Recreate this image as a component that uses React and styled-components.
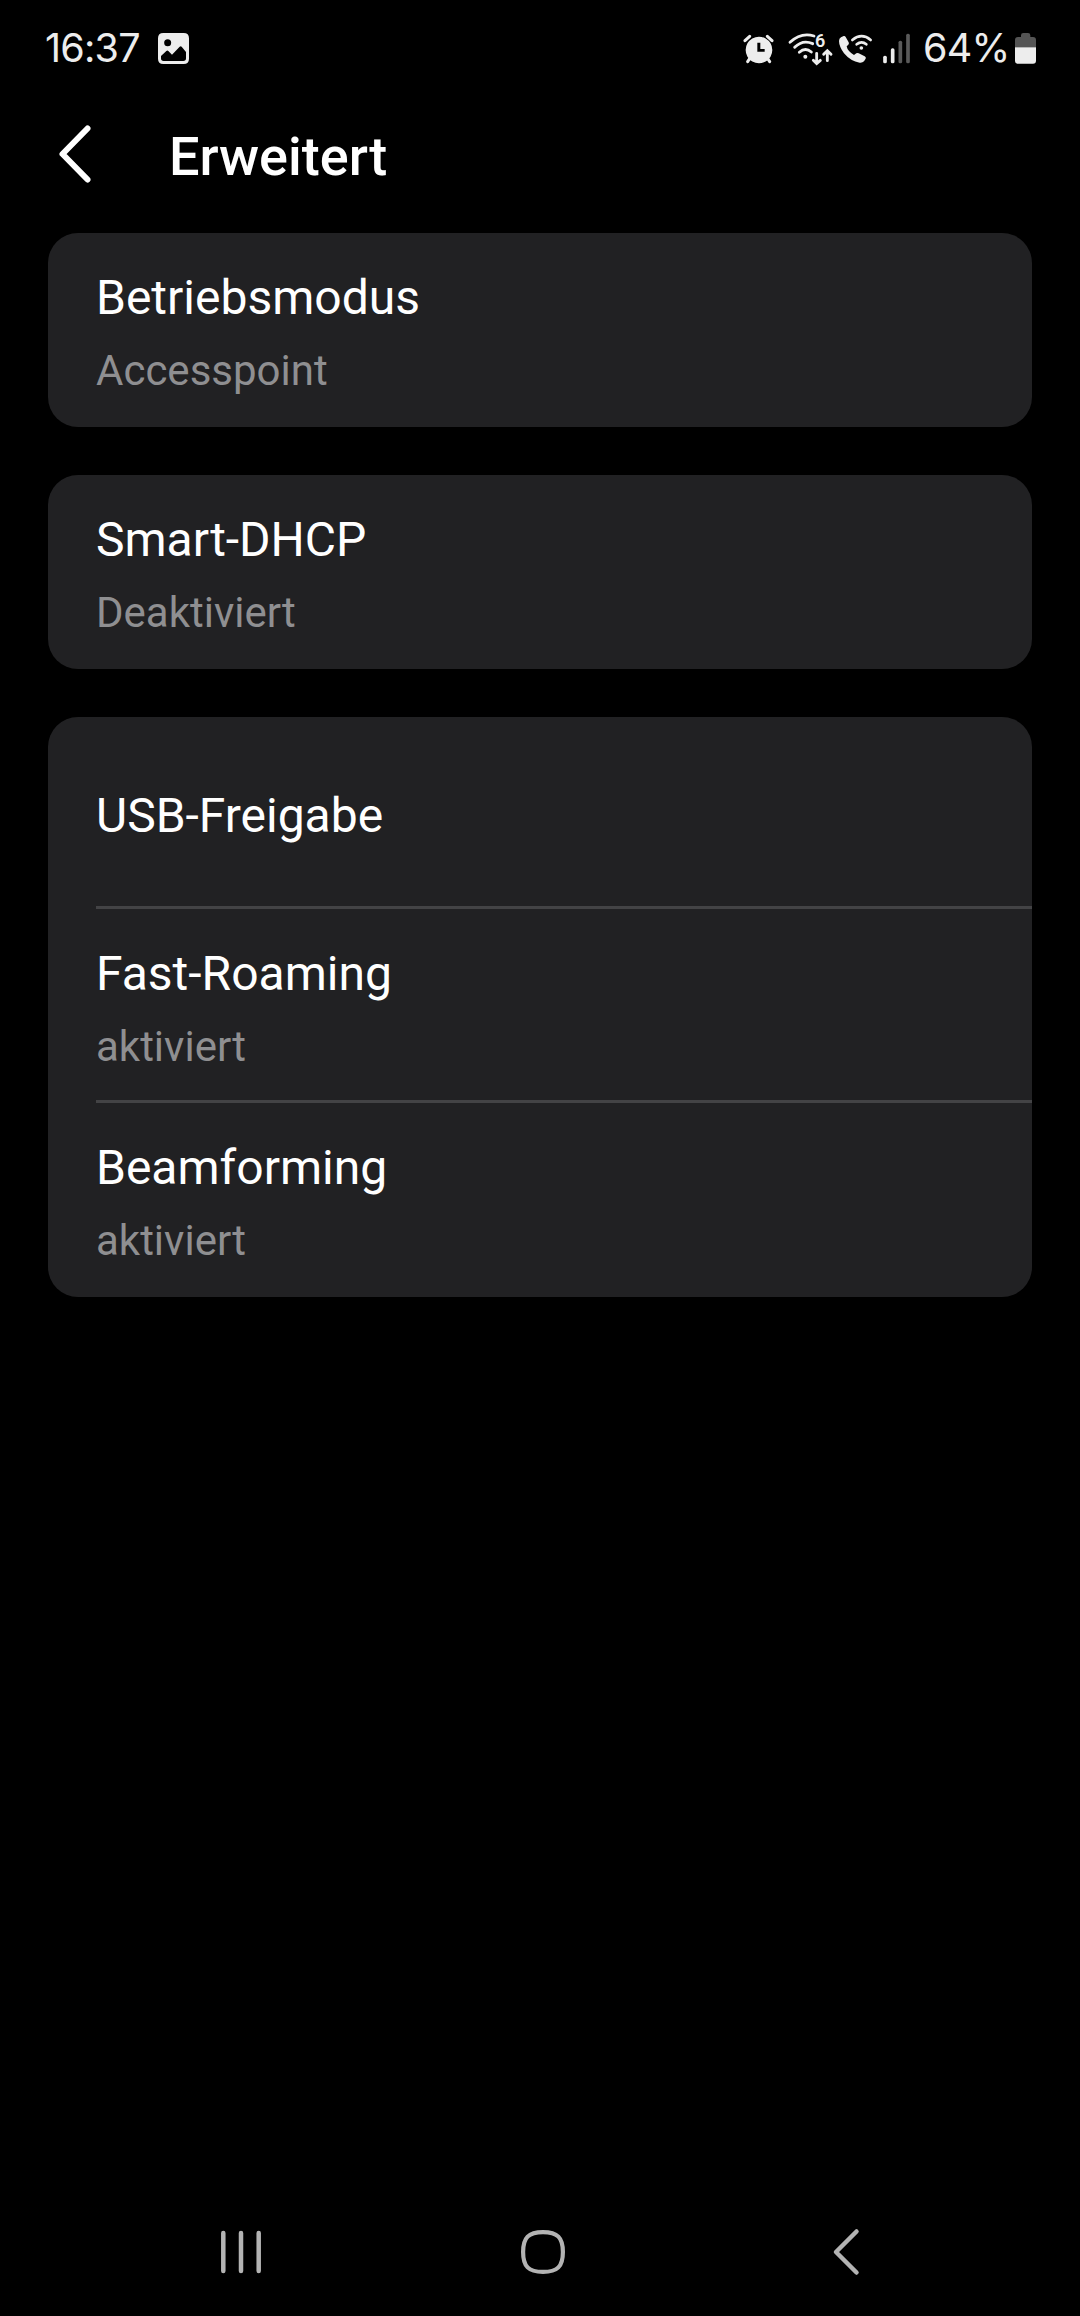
import React from "react";
import styled, { createGlobalStyle } from "styled-components";

const groups = [
  [{ title: "Betriebsmodus", value: "Accesspoint" }],
  [{ title: "Smart-DHCP", value: "Deaktiviert" }],
  [
    { title: "USB-Freigabe" },
    { title: "Fast-Roaming", value: "aktiviert" },
    { title: "Beamforming", value: "aktiviert" },
  ],
];

const StatusBar = () => {
  return (
    <StatusContainer>
      <StatusGroup>
        <StatusText $width={113}>16:37</StatusText>
        <StatusIcon width="31" height="60" viewBox="0 0 93 180">
          <path
            fillRule="evenodd"
            d="M16 39H77Q93 39 93 55V116Q93 132 77 132H16Q0 132 0 116V55Q0 39 16 39ZM29 58A10.500 10.500 0 1 0 29 79A10.500 10.500 0 1 0 29 58ZM9 108V115Q9 123 17 123H76Q84 123 84 115V96L71 80Q68 77 65 80L42 104L31 93Q28 90 25 93Z"
          />
        </StatusIcon>
      </StatusGroup>
      <StatusGroup>
        <StatusIcon width="36" height="60" viewBox="36 0 108 180">
          <path
            fillRule="evenodd"
            d="M87 50A40 40 0 1 1 86.900 50ZM82 68V95H104V87H91V68Z"
          />
          <path
            d="M45 62L59 49M112 49L126 62M53 125L60 114M119 125L112 114"
            fill="none"
            stroke="#ededed"
            strokeWidth="9"
            strokeLinecap="round"
          />
        </StatusIcon>
        <StatusIcon $left={8} width="48" height="60" viewBox="168 0 144 180">
          <circle cx="226" cy="110" r="6" />
          <g
            fill="none"
            stroke="#ededed"
            strokeWidth="8.500"
            strokeLinecap="round"
          >
            <path d="M208 97Q226 80 244 96" />
            <path d="M194 82Q218 58 248 71" />
            <path d="M180 67Q213 36 252 48" />
            <path d="M260 100V130M250 121L260 131L271 121" />
            <path d="M292 122V93M281 103L292 92L303 103" />
          </g>
          <SixLabel x="255" y="80">
            6
          </SixLabel>
        </StatusIcon>
        <StatusIcon $left={3} width="37" height="60" viewBox="321 0 111 180">
          <path d="M333 52L341 48Q345 47 347 51L356 67Q358 71 355 74L350 79Q352 93 372 105L379 100Q382 98 386 100L404 109Q409 112 407 116L402 124Q397 129 389 128Q362 124 342 100Q327 79 327 63Q327 56 333 52Z" />
          <circle cx="394" cy="84" r="5.500" />
          <path
            d="M380 73Q395 61 409 73M367 60Q395 37 422 60"
            fill="none"
            stroke="#ededed"
            strokeWidth="8"
            strokeLinecap="round"
          />
        </StatusIcon>
        <StatusIcon $left={7} width="31" height="60" viewBox="33 0 93 180">
          <rect x="39.500" y="107" width="11" height="23" rx="5" />
          <rect x="62.500" y="85" width="11" height="45" rx="5" />
          <rect x="85.500" y="62" width="11" height="68" rx="5" fill="#5a5a5a" />
          <rect x="108.500" y="41" width="11" height="89" rx="5" fill="#5a5a5a" />
        </StatusIcon>
        <StatusText $left={11} $width={90}>
          64%
        </StatusText>
        <StatusIcon width="25" height="60" viewBox="429 0 75 180">
          <path
            d="M435 82V60Q435 51 444 51H453V46Q453 39 460 39H474Q481 39 481 46V51H489Q498 51 498 60V82Z"
            fill="#555"
          />
          <path d="M435 82H498V122Q498 131 489 131H444Q435 131 435 122Z" />
        </StatusIcon>
      </StatusGroup>
    </StatusContainer>
  );
};

const Header = () => {
  return (
    <HeaderContainer>
      <BackButton aria-label="Zurück">
        <svg width="40" height="64" viewBox="0 0 40 64" fill="none">
          <path
            d="M32.500 6.500L7.500 32L32.500 57.500"
            stroke="#fff"
            strokeWidth="6"
            strokeLinecap="round"
            strokeLinejoin="round"
          />
        </svg>
      </BackButton>
      <Heading>Erweitert</Heading>
    </HeaderContainer>
  );
};

const NavigationBar = () => {
  return (
    <NavContainer>
      <NavButton aria-label="Letzte Apps">
        <svg width="48" height="48" viewBox="0 0 48 48">
          <path
            d="M6.300 5V43M24 5V43M41.700 5V43"
            stroke="#b3b3b3"
            strokeWidth="4.500"
            strokeLinecap="round"
          />
        </svg>
      </NavButton>
      <NavButton aria-label="Startbildschirm">
        <svg width="48" height="48" viewBox="0 0 48 48">
          <path
            d="M24 4.100C38.500 4.100 43.900 9.500 43.900 24S38.500 43.900 24 43.900S4.100 38.500 4.100 24S9.500 4.100 24 4.100Z"
            fill="none"
            stroke="#b3b3b3"
            strokeWidth="4.200"
          />
        </svg>
      </NavButton>
      <NavButton aria-label="Zurück">
        <svg width="48" height="48" viewBox="0 0 48 48">
          <path
            d="M35.500 3.500L15 24L35.500 44.500"
            fill="none"
            stroke="#b3b3b3"
            strokeWidth="4.500"
            strokeLinecap="round"
            strokeLinejoin="round"
          />
        </svg>
      </NavButton>
    </NavContainer>
  );
};

const App = () => {
  return (
    <Screen>
      <GlobalStyle />
      <StatusBar />
      <Header />
      <Settings>
        {groups.map((rows) => (
          <Card key={rows[0].title}>
            {rows.map(({ title, value }) => (
              <Row key={title} $single={!value}>
                <RowTitle>{title}</RowTitle>
                {value && <RowValue>{value}</RowValue>}
              </Row>
            ))}
          </Card>
        ))}
      </Settings>
      <NavigationBar />
    </Screen>
  );
};

export default App;

const GlobalStyle = createGlobalStyle`
  * {
    box-sizing: border-box;
  }

  body {
    margin: 0;
    background-color: #000;
    font-family: Roboto, sans-serif;
  }

  button {
    border: 0;
    padding: 0;
    background: none;
    cursor: pointer;
  }

  svg {
    display: block;
  }
`;

const Screen = styled.div`
  width: 1080px;
  height: 2316px;
  display: flex;
  flex-direction: column;
  background-color: #000;
`;

const StatusContainer = styled.div`
  height: 100px;
  padding: 18px 42px 0 45px;
  display: flex;
  justify-content: space-between;
`;

const StatusGroup = styled.div`
  height: 60px;
  display: flex;
  align-items: center;
`;

const StatusText = styled.span`
  width: ${({ $width }) => $width}px;
  margin-left: ${({ $left = 0 }) => $left}px;
  font-family: Inter, sans-serif;
  font-size: 39.5px;
  line-height: 60px;
  letter-spacing: -0.8px;
  white-space: nowrap;
  color: #ededed;
`;

const StatusIcon = styled.svg`
  flex: none;
  margin-top: 4px;
  margin-left: ${({ $left = 0 }) => $left}px;
  fill: #ededed;
`;

const SixLabel = styled.text`
  font-family: Roboto, sans-serif;
  font-size: 54px;
  font-weight: 600;
`;

const HeaderContainer = styled.header`
  height: 133px;
  padding-left: 55px;
  display: flex;
  align-items: flex-start;
`;

const BackButton = styled.button`
  margin-top: 22px;
`;

const Heading = styled.h1`
  margin: 25px 0 0 74px;
  font-size: 54px;
  font-weight: 500;
  line-height: 64px;
  color: #fff;
`;

const Settings = styled.main`
  flex: 1;
  padding: 0 48px;
  display: flex;
  flex-direction: column;
  gap: 48px;
`;

const Card = styled.section`
  padding-left: 48px;
  border-radius: 30px;
  background-color: #212123;
`;

const Row = styled.div`
  height: ${({ $single }) => ($single ? 189 : 194)}px;
  padding-top: ${({ $single }) => ($single ? 71 : 37)}px;

  & + & {
    height: 194px;
    border-top: 3px solid #434345;
  }

  & + &:last-child {
    height: 197px;
  }
`;

const RowTitle = styled.div`
  font-size: 48px;
  line-height: 56px;
  color: #fff;
`;

const RowValue = styled.div`
  margin-top: 20px;
  font-size: 42px;
  line-height: 50px;
  color: #8f8f91;
`;

const NavContainer = styled.nav`
  height: 128px;
  padding: 0 211px 0 217px;
  display: flex;
  align-items: center;
  justify-content: space-between;
`;

const NavButton = styled.button`
  width: 48px;
  height: 48px;
`;
